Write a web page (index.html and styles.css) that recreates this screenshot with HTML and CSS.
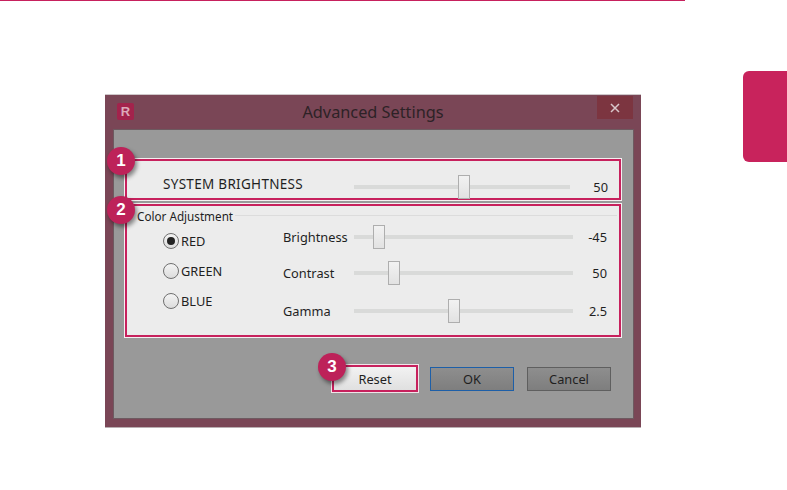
FILE: index.html
```html
<!DOCTYPE html>
<html lang="en">
  <head>
    <meta charset="UTF-8" />
    <meta name="viewport" content="width=device-width, initial-scale=1.0" />
    <title>Advanced Settings</title>
    <link rel="stylesheet" href="styles.css">
  </head>
  <body>
    <div class="top-rule"></div>
    <div class="side-tab"></div>

    <div class="dialog">
      <div class="title-bar">
        <span class="app-icon">R</span>
        <span class="title">Advanced Settings</span>
        <span class="close">
          <svg width="10" height="10" viewBox="0 0 10 10">
            <path d="M1 1 L9 9 M9 1 L1 9" stroke="#d9c8cb" stroke-width="1.5" fill="none" />
          </svg>
        </span>
      </div>

      <div class="content">
        <div class="panel panel-system">
          <span class="badge badge-one">1</span>
          <span class="system-label">SYSTEM BRIGHTNESS</span>
          <div class="slider slider-system"><span class="thumb" style="left: 104px"></span></div>
          <span class="value value-system">50</span>
        </div>

        <div class="panel panel-color">
          <span class="badge badge-two">2</span>
          <div class="legend"><span class="legend-text">Color Adjustment</span></div>
          <div class="color-body">
            <div class="radios">
              <div class="radio-row"><span class="radio checked"></span>RED</div>
              <div class="radio-row"><span class="radio"></span>GREEN</div>
              <div class="radio-row"><span class="radio"></span>BLUE</div>
            </div>
            <div class="sliders">
              <div class="slider-row row-brightness">
                <span class="slider-label">Brightness</span>
                <div class="slider"><span class="thumb" style="left: 19px"></span></div>
                <span class="value">-45</span>
              </div>
              <div class="slider-row row-contrast">
                <span class="slider-label">Contrast</span>
                <div class="slider"><span class="thumb" style="left: 34px"></span></div>
                <span class="value">50</span>
              </div>
              <div class="slider-row row-gamma">
                <span class="slider-label">Gamma</span>
                <div class="slider"><span class="thumb" style="left: 94px"></span></div>
                <span class="value">2.5</span>
              </div>
            </div>
          </div>
        </div>

        <div class="buttons">
          <button class="btn btn-reset">
            <span class="badge badge-three">3</span>
            Reset
          </button>
          <button class="btn btn-ok">OK</button>
          <button class="btn btn-cancel">Cancel</button>
        </div>
      </div>
    </div>
  </body>
</html>
```

FILE: styles.css
```css
* {
  box-sizing: border-box;
}
body {
  margin: 0;
  height: 490px;
  overflow: hidden;
  background: white;
  font-family: "Noto Sans", "Open Sans", sans-serif;
  font-size: 12.8px;
  color: #1f1f1f;
}

.top-rule {
  width: 685px;
  height: 1px;
  background: #c7215d;
}

.side-tab {
  position: absolute;
  top: 71px;
  right: 0;
  width: 44px;
  height: 91px;
  background: #c8235c;
  border-radius: 6px 0 0 6px;
}

.dialog {
  width: 536px;
  height: 334px;
  margin: 93px 0 0 105px;
  background: #7a4656;
  border-top: 1px solid #cfc8ca;
  border-bottom: 1px solid #b9aeb1;
  display: flex;
  flex-direction: column;
}

.title-bar {
  position: relative;
  height: 35px;
  flex-shrink: 0;
  display: flex;
  align-items: center;
  justify-content: center;
}
.app-icon {
  position: absolute;
  left: 12px;
  top: 8px;
  width: 17px;
  height: 17px;
  border-radius: 2px;
  background: #a3234c;
  color: #dca9ba;
  font-family: "Liberation Sans", sans-serif;
  font-size: 13px;
  font-weight: bold;
  line-height: 17px;
  text-align: center;
}
.title {
  font-size: 16.3px;
  color: #2d2226;
  margin-top: -2px;
}
.close {
  position: absolute;
  top: 1px;
  right: 8px;
  width: 36px;
  height: 23px;
  background: #7c3540;
  display: flex;
  align-items: center;
  justify-content: center;
}

.content {
  flex: 1;
  margin: 0 8px 9px 9px;
  padding: 29px 11px 0;
  background: #999;
  box-shadow: 0 0 0 1px #6d5a60;
  display: flex;
  flex-direction: column;
}

.panel {
  position: relative;
  width: 496px;
  background: #ececec;
  border: 2px solid #c7215d;
  outline: 1px solid #f4f0f1;
}
.panel-system {
  height: 41px;
  display: flex;
  align-items: center;
  padding-left: 36px;
}
.panel-color {
  height: 133px;
  margin-top: 4px;
}

.badge {
  position: absolute;
  width: 28px;
  height: 28px;
  border-radius: 50%;
  background: #bd2259;
  color: white;
  font-family: "Liberation Sans", sans-serif;
  font-size: 17px;
  font-weight: bold;
  line-height: 28px;
  text-align: center;
  box-shadow: 2px 3px 4px rgba(0, 0, 0, 0.45);
}
.badge-one {
  left: -20px;
  top: -14px;
}
.badge-two {
  left: -20px;
  top: -10px;
}
.badge-three {
  left: -16px;
  top: -14px;
}

.system-label {
  width: 191px;
  font-size: 13.5px;
  letter-spacing: 0.3px;
  white-space: nowrap;
  margin-top: 8px;
}
.slider {
  position: relative;
  height: 4px;
  flex: 1;
  background: #d9dad9;
}
.slider-system {
  flex: none;
  width: 216px;
  margin-top: 14px;
}
.thumb {
  position: absolute;
  top: -10px;
  width: 12px;
  height: 24px;
  background: linear-gradient(#f2f2f2, #e2e2e2);
  border: 1px solid #aeaeae;
}
.value {
  width: 34px;
  font-size: 12.8px;
  text-align: right;
}
.value-system {
  margin-top: 14px;
  margin-left: 4px;
}

.legend {
  display: flex;
  align-items: center;
  gap: 2px;
  margin: 2px 2px 0 10px;
  height: 17px;
  font-size: 11.7px;
}
.legend-text {
  margin-top: -2px;
}
.legend::after {
  content: "";
  flex: 1;
  height: 1px;
  margin-bottom: 2px;
  background: #dcdcdc;
}

.color-body {
  display: flex;
  padding-left: 36px;
}
.radios {
  width: 120px;
  padding-top: 7px;
  display: flex;
  flex-direction: column;
  gap: 13px;
}
.radio-row {
  display: flex;
  align-items: center;
  gap: 2px;
  height: 17px;
}
.radio {
  width: 16px;
  height: 16px;
  border-radius: 50%;
  background: linear-gradient(#f4f4f4, #dcdcdc);
  border: 1px solid #6f6f6f;
  display: flex;
  align-items: center;
  justify-content: center;
}
.radio.checked::after {
  content: "";
  width: 8px;
  height: 8px;
  border-radius: 50%;
  background: #222;
}
.sliders {
  flex: 1;
}
.slider-row {
  display: flex;
  align-items: center;
  height: 24px;
}
.row-contrast {
  margin-top: 12px;
}
.row-gamma {
  margin-top: 14px;
}
.slider-label {
  width: 71px;
}
.slider-row .slider {
  flex: none;
  width: 219px;
}

.buttons {
  display: flex;
  align-items: center;
  justify-content: flex-end;
  margin-top: 28px;
  padding-right: 11px;
}
.btn {
  position: relative;
  width: 84px;
  height: 24px;
  padding: 0;
  font-family: inherit;
  font-size: 12.8px;
  color: #1f1f1f;
  background: linear-gradient(#8e8e8e, #7e7e7e);
  border: 1px solid #5f5f5f;
}
.btn-reset {
  width: 86px;
  height: 27px;
  margin-right: 12px;
  background: linear-gradient(#f2f2f2, #e0e0e0);
  border: 2px solid #c7215d;
  outline: 1px solid #f0e4e8;
}
.btn-ok {
  margin-right: 13px;
  border-color: #1d5fa8;
}
```
